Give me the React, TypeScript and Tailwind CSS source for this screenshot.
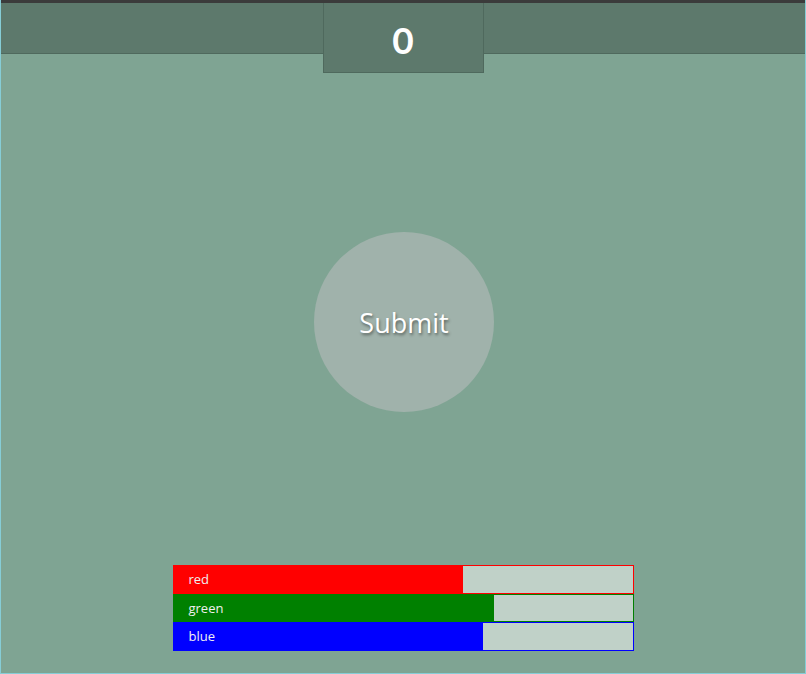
import React from "react";

const bars = [
  { label: "red", color: "#ff0000", value: 161 },
  { label: "green", color: "#008000", value: 178 },
  { label: "blue", color: "#0000ff", value: 172 },
];

export default function App() {
  return (
    <div className="w-[806px] h-[674px] flex flex-col bg-[#7fa493] border-x border-b border-[#86cdd6] relative overflow-hidden" style={{ fontFamily: '"Open Sans", "DejaVu Sans", sans-serif' }}>
      <div className="h-[3px] bg-[#3b3b3b] shrink-0 -mx-px" />
      <div className="h-[51px] shrink-0 bg-[#5d796c] border-b border-[#4f695d] flex justify-center -mx-px relative">
        <div className="w-[161px] h-[70px] bg-[#5d796c] border-x border-b border-[#4f695d] flex items-center justify-center pt-[4px] text-white font-semibold text-[37px] leading-none z-10" style={{ fontFamily: 'Lato, "Open Sans", sans-serif', fontWeight: 700 }}>
          0
        </div>
      </div>
      <div className="flex-1 flex flex-col items-center">
        <div className="mt-[178px] ml-[2px] w-[180px] h-[180px] rounded-full bg-[#a0b2ab] flex items-center justify-center">
          <span className="text-white text-[27px] leading-none [text-shadow:1px_2px_3px_rgba(0,0,0,0.45)]">Submit</span>
        </div>
        <div className="mt-[153px] w-[461px] flex flex-col">
          {bars.map((b) => (
            <div key={b.label} className="h-[28.667px] border relative bg-[#c0d1c8]" style={{ borderColor: b.color }}>
              <div className="absolute left-0 top-0 bottom-0" style={{ width: `${(b.value / 255) * 100}%`, background: b.color }} />
              <span className="relative pl-[15px] text-[13px] leading-[27px] text-[#f0f0f0] block">{b.label}</span>
            </div>
          ))}
        </div>
      </div>
    </div>
  );
}
